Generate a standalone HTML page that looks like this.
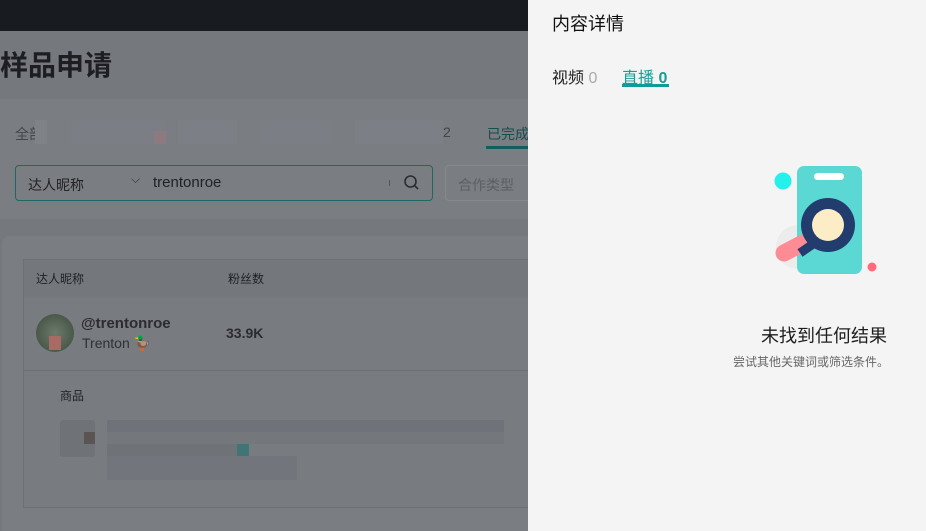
<!DOCTYPE html>
<html><head><meta charset="utf-8"><style>
*{margin:0;padding:0;box-sizing:border-box}
html,body{width:926px;height:531px;overflow:hidden}
body{background:#75787d;font-family:"Liberation Sans","Noto Sans CJK SC",sans-serif;position:relative}
.a{position:absolute}
.px{position:absolute;background:#80838a}
</style></head><body>
<div class="a" style="left:0;top:0;width:528px;height:31px;background:#181b20"></div>
<div class="a" style="left:0;top:44px;font-size:28px;font-weight:bold;color:#1c1e22">样品申请</div>
<div class="a" style="left:-10px;top:99px;width:545px;height:120px;background:#7a7d82;border-radius:10px"></div>
<div class="a" style="left:15px;top:124px;font-size:14px;color:#43464b">全部</div>
<div class="px" style="left:35px;top:120px;width:12px;height:24px;background:#7f8287"></div>
<div class="px" style="left:71px;top:120px;width:95px;height:24px;background:#7b7e84"></div>
<div class="px" style="left:154px;top:131px;width:12px;height:13px;background:#8c7a80"></div>
<div class="px" style="left:178px;top:120px;width:59px;height:24px;background:#7c7f86"></div>
<div class="px" style="left:260px;top:120px;width:71px;height:24px;background:#7b7e84"></div>
<div class="px" style="left:355px;top:120px;width:88px;height:24px;background:#7c7f85"></div>
<div class="a" style="left:443px;top:124px;font-size:14px;color:#43464b">2</div>
<div class="a" style="left:487px;top:124px;font-size:14px;color:#164d4d">已完成</div>
<div class="a" style="left:486px;top:146px;width:42px;height:3px;background:#0f5f5e"></div>
<div class="a" style="left:15px;top:165px;width:418px;height:36px;border:1px solid #1d6766;border-radius:4px"></div>
<div class="a" style="left:28px;top:175px;font-size:14px;color:#222">达人昵称</div>
<div class="a" style="left:131px;top:172px;font-size:12px;color:#333">⌵</div>
<div class="a" style="left:153px;top:174px;font-size:15px;color:#1f2125">trentonroe</div>
<div class="a" style="left:389px;top:180px;width:1px;height:6px;background:#555"></div>
<svg class="a" style="left:403px;top:174px" width="17" height="17"><circle cx="7.5" cy="7.5" r="5.5" fill="none" stroke="#2b2d31" stroke-width="1.6"/><line x1="11.5" y1="11.5" x2="15" y2="15" stroke="#2b2d31" stroke-width="1.6"/></svg>
<div class="a" style="left:445px;top:165px;width:100px;height:36px;border:1px solid #85888d;border-radius:4px"></div>
<div class="a" style="left:458px;top:175px;font-size:14px;color:#5c5f64">合作类型</div>
<div class="a" style="left:2px;top:236px;width:540px;height:295px;background:#7a7d82;border-radius:8px 8px 0 0"></div>
<div class="a" style="left:23px;top:259px;width:520px;height:249px;border:1px solid #6d7075;background:#787b80"></div>
<div class="a" style="left:24px;top:260px;width:510px;height:37px;background:#74777c"></div>
<div class="a" style="left:36px;top:270px;font-size:12px;color:#1e2024">达人昵称</div>
<div class="a" style="left:228px;top:270px;font-size:12px;color:#1e2024">粉丝数</div>
<div class="a" style="left:24px;top:370px;width:510px;height:1px;background:#6b6e73"></div>
<div class="a" style="left:36px;top:314px;width:38px;height:38px;border-radius:50%;background:radial-gradient(circle at 50% 50%,#6b7a6b,#3c4a3c);overflow:hidden"><div style="position:absolute;left:13px;top:22px;width:12px;height:14px;background:#a86a62"></div></div>
<div class="a" style="left:81px;top:315px;font-size:15px;font-weight:bold;color:#2a2c30">@trentonroe</div>
<div class="a" style="left:82px;top:335px;font-size:14px;color:#2f3136">Trenton 🦆</div>
<div class="a" style="left:226px;top:325px;font-size:14px;font-weight:bold;color:#2a2c30">33.9K</div>
<div class="a" style="left:60px;top:387px;font-size:12px;color:#1e2024">商品</div>
<div class="px" style="left:60px;top:420px;width:35px;height:37px;background:#6f7277;border-radius:3px"></div>
<div class="px" style="left:84px;top:432px;width:11px;height:12px;background:#5a5452"></div>
<div class="px" style="left:107px;top:420px;width:397px;height:12px;background:#6f7278"></div>
<div class="px" style="left:107px;top:432px;width:397px;height:12px;background:#74777c"></div>
<div class="px" style="left:107px;top:444px;width:130px;height:12px;background:#6f7277"></div>
<div class="px" style="left:237px;top:444px;width:12px;height:12px;background:#3f7577"></div>
<div class="px" style="left:107px;top:456px;width:190px;height:24px;background:#72757c"></div>
<div class="a" style="left:528px;top:0;width:398px;height:531px;background:#f4f4f4"></div>
<div class="a" style="left:552px;top:10px;font-size:18px;color:#111">内容详情</div>
<div class="a" style="left:552px;top:64px;font-size:16px;color:#222">视频 <span style="color:#aaa">0</span></div>
<div class="a" style="left:622px;top:64px;font-size:16px;color:#1a9d96">直播 <b>0</b></div>
<div class="a" style="left:622px;top:84px;width:47px;height:3px;background:#0e9c96"></div>
<svg class="a" style="left:770px;top:160px" width="112" height="120">
<circle cx="13" cy="21" r="8.5" fill="#24f0ec"/>
<circle cx="28" cy="87" r="22" fill="#ececec"/>
<rect x="27" y="6" width="65" height="108" rx="7" fill="#5cd8d4"/>
<rect x="44" y="13" width="30" height="7" rx="3.5" fill="#fff"/>
<line x1="14" y1="93" x2="33" y2="83" stroke="#ff8c94" stroke-width="17" stroke-linecap="round"/>
<line x1="30" y1="93" x2="46" y2="82" stroke="#213c6d" stroke-width="9"/>
<circle cx="58" cy="65" r="27" fill="#213c6d"/>
<circle cx="58" cy="65" r="16" fill="#fdedc7"/>
<circle cx="102" cy="107" r="4.5" fill="#ff6b7a"/>
</svg>
<div class="a" style="left:761px;top:322px;font-size:18px;color:#1d1d1d">未找到任何结果</div>
<div class="a" style="left:733px;top:353px;font-size:12px;color:#666">尝试其他关键词或筛选条件。</div>
</body></html>
